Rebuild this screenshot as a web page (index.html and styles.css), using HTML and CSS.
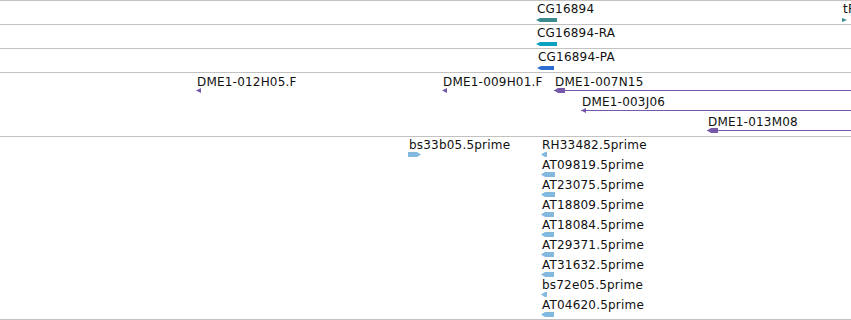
FILE: index.html
```html
<!DOCTYPE html>
<html lang="en">

<head>
    <meta charset="UTF-8">
    <title>Genome tracks</title>
    <link rel="stylesheet" href="styles.css">
</head>

<body>
    <div class="tracks">
        <!-- genes -->
        <div class="track gene-track">
            <div class="feature" style="left:536px">
                <div class="label">CG16894</div>
                <div class="glyph box minus teal" style="width:21px"></div>
            </div>
            <div class="feature" style="left:842px">
                <div class="label">tR</div>
                <div class="glyph tri plus teal" style="width:5px"></div>
            </div>
        </div>

        <!-- transcripts -->
        <div class="track gene-track">
            <div class="feature" style="left:536px">
                <div class="label">CG16894-RA</div>
                <div class="glyph box minus cyan" style="width:21px"></div>
            </div>
        </div>

        <!-- proteins -->
        <div class="track gene-track">
            <div class="feature" style="left:537px">
                <div class="label">CG16894-PA</div>
                <div class="glyph box minus blue" style="width:17px"></div>
            </div>
        </div>

        <!-- BAC ends -->
        <div class="track bac-track">
            <div class="feature" style="left:196px; top:2px">
                <div class="label">DME1-012H05.F</div>
                <div class="glyph tri minus purple" style="width:5px"></div>
            </div>
            <div class="feature" style="left:442px; top:2px">
                <div class="label">DME1-009H01.F</div>
                <div class="glyph tri minus purple" style="width:5px"></div>
            </div>
            <div class="feature" style="left:554px; top:2px">
                <div class="label">DME1-007N15</div>
                <div class="glyph match purple big" style="width:320px"></div>
            </div>
            <div class="feature" style="left:581px; top:22px">
                <div class="label">DME1-003J06</div>
                <div class="glyph match purple" style="width:300px"></div>
            </div>
            <div class="feature" style="left:707px; top:42px">
                <div class="label">DME1-013M08</div>
                <div class="glyph match purple big" style="width:200px"></div>
            </div>
        </div>

        <!-- ESTs -->
        <div class="track est-track">
            <div class="feature" style="left:408px; top:1px">
                <div class="label">bs33b05.5prime</div>
                <div class="glyph box plus sky" style="width:13px"></div>
            </div>
            <div class="feature" style="left:541px; top:1px">
                <div class="label">RH33482.5prime</div>
                <div class="glyph box minus sky" style="width:6px"></div>
            </div>
            <div class="feature" style="left:541px; top:21px">
                <div class="label">AT09819.5prime</div>
                <div class="glyph box minus sky" style="width:14px"></div>
            </div>
            <div class="feature" style="left:541px; top:41px">
                <div class="label">AT23075.5prime</div>
                <div class="glyph box minus sky" style="width:14px"></div>
            </div>
            <div class="feature" style="left:541px; top:61px">
                <div class="label">AT18809.5prime</div>
                <div class="glyph box minus sky" style="width:13px"></div>
            </div>
            <div class="feature" style="left:541px; top:81px">
                <div class="label">AT18084.5prime</div>
                <div class="glyph box minus sky" style="width:13px"></div>
            </div>
            <div class="feature" style="left:541px; top:101px">
                <div class="label">AT29371.5prime</div>
                <div class="glyph box minus sky" style="width:13px"></div>
            </div>
            <div class="feature" style="left:541px; top:121px">
                <div class="label">AT31632.5prime</div>
                <div class="glyph box minus sky" style="width:13px"></div>
            </div>
            <div class="feature" style="left:541px; top:141px">
                <div class="label">bs72e05.5prime</div>
                <div class="glyph box minus sky" style="width:6px"></div>
            </div>
            <div class="feature" style="left:541px; top:161px">
                <div class="label">AT04620.5prime</div>
                <div class="glyph box minus sky" style="width:13px"></div>
            </div>
        </div>
    </div>
</body>

</html>
```

FILE: styles.css
```css
* {
    box-sizing: border-box;
    margin: 0;
    padding: 0;
}

body {
    font-family: "DejaVu Sans", "Liberation Sans", sans-serif;
    font-size: 12px;
    color: #111;
    background-color: #fff;
    width: 851px;
    height: 320px;
    overflow: hidden;
}

.track {
    position: relative;
    overflow: hidden;
    border-top: 1px solid #c2c2c2;
}

.gene-track {
    height: 24px;
}

.bac-track {
    height: 64px;
}

.est-track {
    height: 184px;
    border-bottom: 1px solid #c2c2c2;
}

.feature {
    position: absolute;
    top: 1px;
}

.label {
    line-height: 14px;
    padding-left: 1px;
    letter-spacing: 0.2px;
    white-space: nowrap;
}

/* glyphs */
.glyph {
    position: relative;
    background-color: currentColor;
}

.gene-track .glyph {
    height: 4px;
    margin-top: 2px;
}

.bac-track .glyph {
    height: 5px;
    margin-top: -1px;
}

.est-track .glyph {
    height: 5px;
}

.box.minus {
    clip-path: polygon(0 50%, 4px 0, 100% 0, 100% 100%, 4px 100%);
}

.box.plus {
    clip-path: polygon(0 0, calc(100% - 4px) 0, 100% 50%, calc(100% - 4px) 100%, 0 100%);
}

.tri.minus {
    clip-path: polygon(0 50%, 100% 0, 100% 100%);
}

.tri.plus {
    clip-path: polygon(0 0, 100% 50%, 0 100%);
}

.match {
    background: linear-gradient(currentColor, currentColor) 0 2px / 100% 1px no-repeat;
}

.match::before {
    content: "";
    position: absolute;
    left: 0;
    top: 0;
    width: 5px;
    height: 100%;
    background-color: currentColor;
    clip-path: polygon(0 50%, 100% 0, 100% 100%);
}

.match.big::before {
    width: 11px;
    clip-path: polygon(0 50%, 4px 0, 100% 0, 100% 100%, 4px 100%);
}

/* colours */
.teal {
    color: #3b8b8e;
}

.cyan {
    color: #0ba2c2;
}

.blue {
    color: #2e6ecf;
}

.purple {
    color: #7658a9;
}

.sky {
    color: #84b9df;
}
```
